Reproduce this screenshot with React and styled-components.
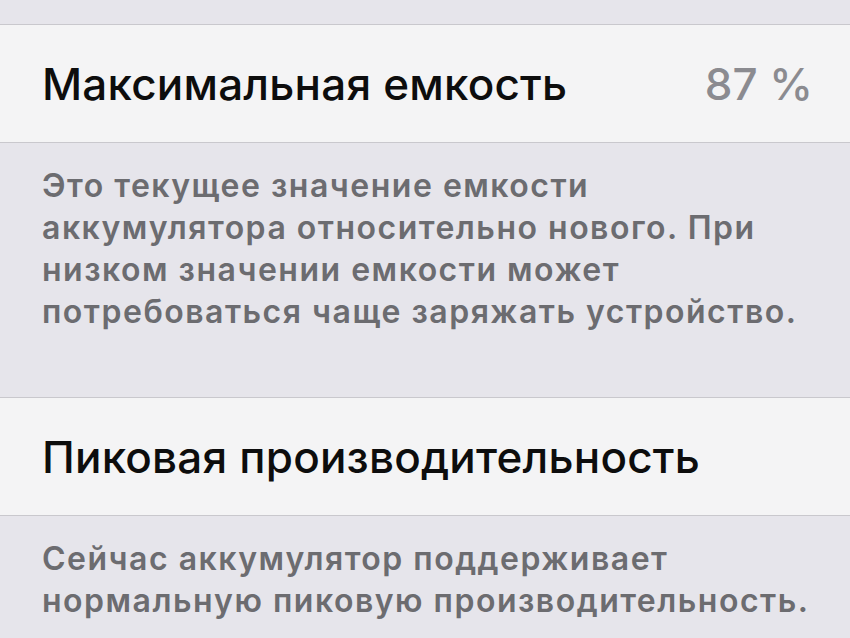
import React from 'react';
import styled, { createGlobalStyle } from 'styled-components';

const GlobalStyle = createGlobalStyle`
  html, body {
    margin: 0;
    padding: 0;
    background: #e6e5eb;
  }
  body {
    font-family: Inter, "Liberation Sans", Arial, sans-serif;
    -webkit-font-smoothing: antialiased;
  }
`

const Screen = styled.div`
  width: 850px;
  height: 638px;
  overflow: hidden;
  background: #e6e5eb;
  padding-top: 24px;
  box-sizing: border-box;
`

const Cell = styled.div`
  display: flex;
  align-items: center;
  justify-content: space-between;
  height: 117px;
  padding: 0 37px 0 42px;
  background: #f4f4f5;
  border-top: 1px solid #c9c8cd;
  border-bottom: 1px solid #c9c8cd;
`

const CellTitle = styled.span`
  font-size: 44px;
  font-weight: 500;
  color: #0d0d0d;
  letter-spacing: 0.2px;
`

const CellValue = styled.span`
  font-size: 44px;
  font-weight: 500;
  color: #8b8b90;
`

const Footer = styled.p`
  margin: 0;
  height: ${props => props.height}px;
  box-sizing: border-box;
  padding: 22px 30px 0 42px;
  font-size: 32px;
  font-weight: 600;
  line-height: 42px;
  color: #6c6c70;
  letter-spacing: 1.5px;
  white-space: nowrap;
`

export default function App() {
  return (
    <>
      <GlobalStyle />
      <Screen>
        <Cell>
          <CellTitle>Максимальная емкость</CellTitle>
          <CellValue>87 %</CellValue>
        </Cell>
        <Footer height={254}>
          Это текущее значение емкости<br />
          аккумулятора относительно нового. При<br />
          низком значении емкости может<br />
          потребоваться чаще заряжать устройство.
        </Footer>
        <Cell>
          <CellTitle>Пиковая производительность</CellTitle>
        </Cell>
        <Footer height={140}>
          Сейчас аккумулятор поддерживает<br />
          нормальную пиковую производительность.
        </Footer>
      </Screen>
    </>
  );
}
